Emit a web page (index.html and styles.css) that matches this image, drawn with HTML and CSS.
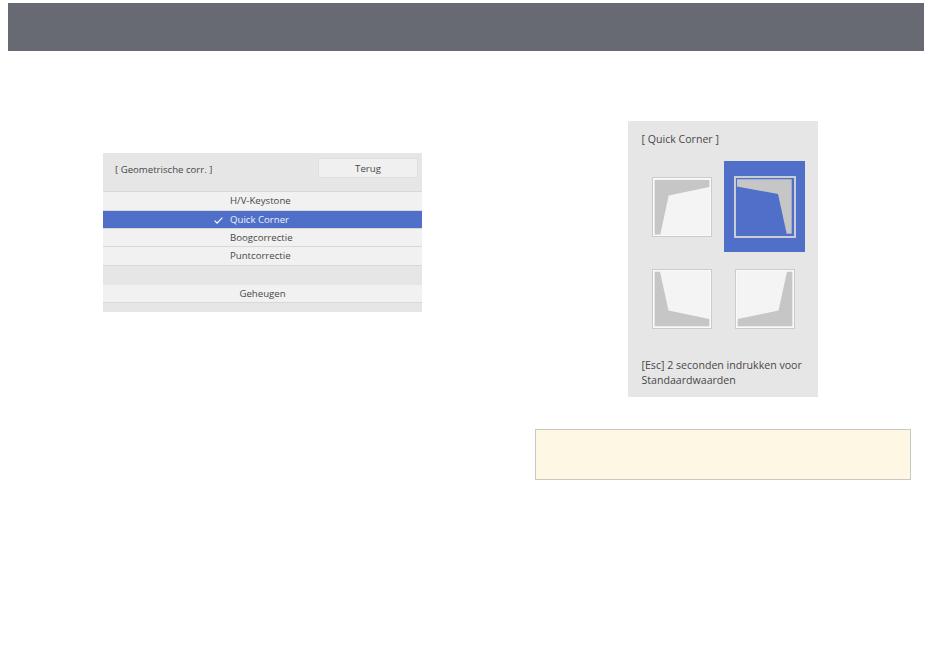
FILE: index.html
```html
<!DOCTYPE html>
<html lang="nl">
<head>
  <meta charset="UTF-8">
  <title>Quick Corner</title>
  <link rel="stylesheet" href="styles.css">
</head>
<body>

<div class="top-bar"></div>

<div class="columns">

  <!--menu links-->
  <div class="menu">
    <div class="menu-head">
      <span>[ Geometrische corr. ]</span>
      <div class="back-btn">Terug</div>
    </div>
    <div class="menu-row">H/V-Keystone</div>
    <div class="menu-row now">
      <svg class="check" viewBox="0 0 10 8"><path d="M0.6 4.2 L3.4 7 L9.4 0.8"/></svg>
      Quick Corner
    </div>
    <div class="menu-row">Boogcorrectie</div>
    <div class="menu-row">Puntcorrectie</div>
    <div class="menu-gap"></div>
    <div class="menu-row center">Geheugen</div>
  </div>

  <!--rechter kolom-->
  <div class="side">
    <div class="corner-panel">
      <div class="corner-title">[ Quick Corner ]</div>
      <div class="corner-grid">
        <div class="cell">
          <svg class="shape" viewBox="0 0 60 60">
            <rect class="frame" x="0.5" y="0.5" width="59" height="59"/>
            <rect class="frame-in" x="1.5" y="1.5" width="57" height="57"/>
            <polygon class="wedge" points="2.7,3 57.3,3 57.3,10 16.7,18.5 8.3,57.5 2.7,57.5"/>
          </svg>
        </div>
        <div class="cell now">
          <svg class="shape" viewBox="0 0 62 62">
            <rect class="frame" x="1" y="1" width="60" height="60"/>
            <polygon class="wedge" points="3,3.3 57.7,3.3 57.7,57.7 52.7,57.7 44,18 3,10.5"/>
          </svg>
        </div>
        <div class="cell">
          <svg class="shape" viewBox="0 0 60 60">
            <rect class="frame" x="0.5" y="0.5" width="59" height="59"/>
            <rect class="frame-in" x="1.5" y="1.5" width="57" height="57"/>
            <polygon class="wedge" points="2.7,2.7 8,2.7 16.5,41.5 57.3,50 57.3,57.3 2.7,57.3"/>
          </svg>
        </div>
        <div class="cell">
          <svg class="shape" viewBox="0 0 60 60">
            <rect class="frame" x="0.5" y="0.5" width="59" height="59"/>
            <rect class="frame-in" x="1.5" y="1.5" width="57" height="57"/>
            <polygon class="wedge" points="52,2.7 57.3,2.7 57.3,57.3 2.7,57.3 2.7,50 43.5,41.5"/>
          </svg>
        </div>
      </div>
      <p class="corner-text">[Esc] 2 seconden indrukken voor Standaardwaarden</p>
    </div>
    <div class="note"></div>
  </div>

</div>

</body>
</html>
```

FILE: styles.css
```css
* {
  margin: 0;
  padding: 0;
  box-sizing: border-box;
}

body {
  background-color: #fff;
  font-family: "Open Sans", "Noto Sans", sans-serif;
  color: #484848;
}

.top-bar {
  height: 48px;
  margin: 3px 26px 0 8px;
  background-color: #686a73;
}

.columns {
  display: flex;
  align-items: flex-start;
}

/*menu links*/
.menu {
  width: 319px;
  margin: 102px 0 0 103px;
  padding-bottom: 8.7px;
  background-color: #e6e6e6;
  font-size: 9.65px;
}

.menu-head {
  height: 39.3px;
  padding: 5px 4px 0 12px;
  display: flex;
  justify-content: space-between;
  align-items: flex-start;
  line-height: 22px;
  border-bottom: 1px solid #d8d8d8;
}

.menu-head span {
  margin-top: 1px;
}

.back-btn {
  width: 100px;
  height: 20px;
  line-height: 19px;
  text-align: center;
  background-color: #f0f0f0;
  border: 1px solid #e0e0e0;
}

.menu-row {
  position: relative;
  height: 18.4px;
  line-height: 17px;
  padding-left: 127px;
  background-color: #f1f1f1;
  border-bottom: 1px solid #d8d8d8;
}

.menu-row.now {
  background-color: #4f6fc8;
  color: #eef1fa;
}

.menu-row.center {
  padding-left: 0;
  text-align: center;
}

.check {
  position: absolute;
  left: 111px;
  top: 6px;
  width: 9px;
  height: 7px;
  fill: none;
  stroke: #fff;
  stroke-width: 1.3;
}

.menu-gap {
  height: 19px;
}

/*rechter kolom*/
.side {
  width: 376px;
  margin: 70px 0 0 113px;
}

.corner-panel {
  width: 190px;
  height: 276px;
  margin: 0 auto;
  padding: 11px 13.5px 0;
  background-color: #e6e6e6;
  font-size: 10.6px;
}

.corner-title {
  line-height: 14px;
}

.corner-grid {
  margin: 15px 0 0 0.5px;
  display: grid;
  grid-template-columns: 80px 81px;
  grid-auto-rows: 91px;
  column-gap: 2px;
  row-gap: 1px;
}

.cell {
  display: flex;
  align-items: center;
  justify-content: center;
}

.cell.now {
  background-color: #4f6fc8;
}

.shape {
  width: 60px;
  height: 60px;
}

.now .shape {
  width: 62px;
  height: 62px;
}

.frame {
  fill: #f4f4f4;
  stroke: #cbcbcb;
  stroke-width: 1;
}

.frame-in {
  fill: #f4f4f4;
  stroke: #fafafa;
  stroke-width: 1;
}

.wedge {
  fill: #c6c6c6;
}

.now .frame {
  fill: #4f6fc8;
  stroke: #c9cdd6;
  stroke-width: 2;
}

.corner-text {
  margin-top: 14px;
  line-height: 14.5px;
}

.note {
  height: 51px;
  margin-top: 32px;
  background-color: #fdf7e4;
  border: 1px solid #c8c8c4;
}
```
